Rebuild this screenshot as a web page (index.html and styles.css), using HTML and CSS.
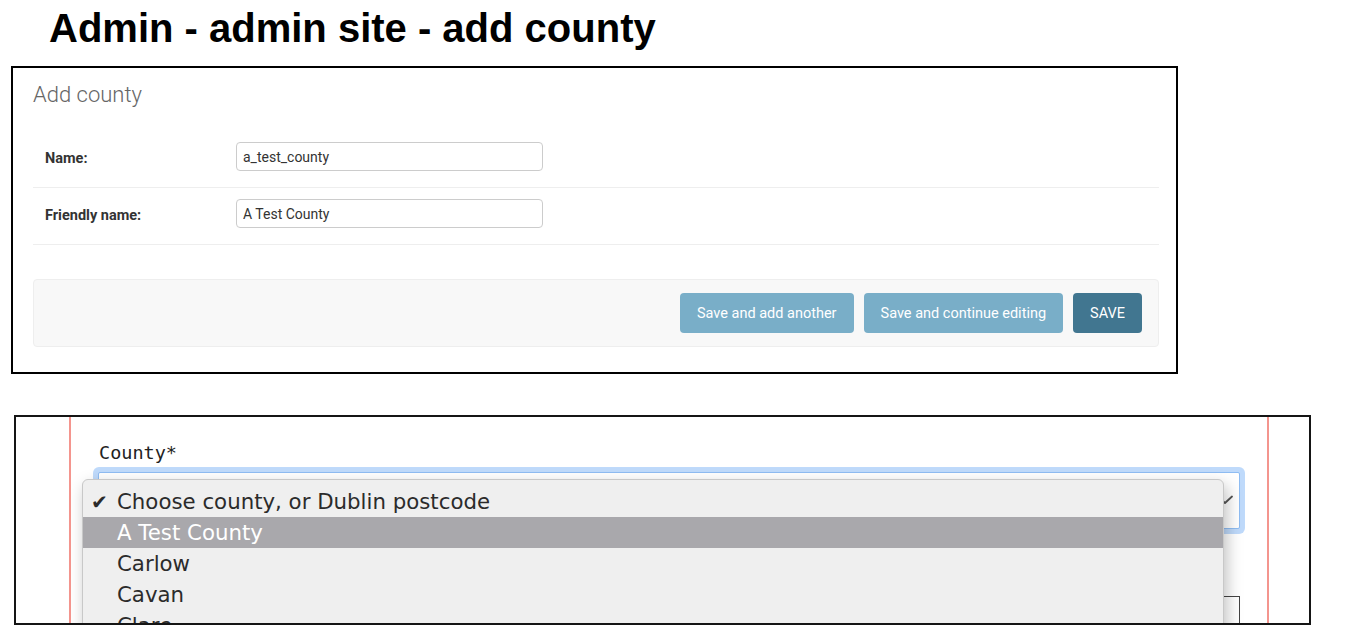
FILE: index.html
```html
<!DOCTYPE html>
<html lang="en">
<head>
<meta charset="utf-8">
<title>Admin - admin site - add county</title>
<link rel="stylesheet" href="styles.css">
</head>
<body>
<h1 class="doc-title">Admin - admin site - add county</h1>

<section class="shot shot-admin">
  <h2 class="admin-title">Add county</h2>
  <div class="form-row">
    <label class="form-label" for="f-name">Name:</label>
    <input class="text-input" id="f-name" type="text" value="a_test_county" readonly>
  </div>
  <div class="form-row">
    <label class="form-label" for="f-friendly">Friendly name:</label>
    <input class="text-input" id="f-friendly" type="text" value="A Test County" readonly>
  </div>
  <div class="submit-row">
    <button class="btn btn-light" type="button">Save and add another</button>
    <button class="btn btn-light" type="button">Save and continue editing</button>
    <button class="btn btn-dark" type="button">SAVE</button>
  </div>
</section>

<section class="shot shot-site">
  <div class="page">
    <label class="field-label">County*</label>
    <div class="select-box">
      <svg class="select-arrow" width="16" height="10" viewBox="0 0 16 10" aria-hidden="true">
        <path d="M1 1.5 L8 8 L15 1.5" fill="none" stroke="#555" stroke-width="1.8" stroke-linecap="round" stroke-linejoin="round"/>
      </svg>
    </div>
    <div class="next-field"></div>
  </div>
  <ul class="select-menu">
    <li class="opt opt-checked">Choose county, or Dublin postcode</li>
    <li class="opt opt-hl">A Test County</li>
    <li class="opt">Carlow</li>
    <li class="opt">Cavan</li>
    <li class="opt">Clare</li>
  </ul>
</section>
</body>
</html>
```

FILE: styles.css
```css
html, body {
  margin: 0;
  padding: 0;
  background: #ffffff;
}

body {
  font-family: "Liberation Sans", Arial, sans-serif;
  width: 1354px;
  height: 640px;
  overflow: hidden;
}

.doc-title {
  margin: 0;
  padding: 5px 0 0 49px;
  font-family: "Liberation Sans", Arial, sans-serif;
  font-weight: 700;
  font-size: 40px;
  line-height: 46px;
  color: #000;
}

.shot {
  box-sizing: border-box;
  background: #fff;
}

/* ---------- admin screenshot ---------- */
.shot-admin {
  margin: 15px 0 0 11px;
  width: 1167px;
  height: 308px;
  border: 2px solid #000;
  padding: 13px 17px 0 20px;
  font-family: Roboto, "Liberation Sans", sans-serif;
}

.admin-title {
  margin: 0 0 22px;
  font-size: 22px;
  line-height: 28px;
  font-weight: 300;
  color: #666;
}

.form-row {
  display: flex;
  align-items: center;
  padding: 11px 0 16px;
  border-bottom: 1px solid #eee;
}

.form-label {
  box-sizing: border-box;
  width: 203px;
  padding: 4px 0 0 12px;
  font-size: 14.5px;
  line-height: 18px;
  font-weight: 700;
  color: #333;
}

.text-input {
  box-sizing: border-box;
  width: 307px;
  height: 29px;
  margin: 0;
  padding: 0 6px;
  border: 1px solid #ccc;
  border-radius: 4px;
  font-family: Roboto, "Liberation Sans", sans-serif;
  font-size: 14px;
  color: #333;
  background: #fff;
  outline: none;
}

.submit-row {
  box-sizing: border-box;
  margin-top: 34px;
  height: 68px;
  padding: 13px 16px;
  display: flex;
  justify-content: flex-end;
  gap: 10px;
  background: #f8f8f8;
  border: 1px solid #eee;
  border-radius: 4px;
}

.btn {
  height: 40px;
  padding: 0 17px;
  border: 0;
  border-radius: 4px;
  font-family: Roboto, "Liberation Sans", sans-serif;
  font-size: 14.5px;
  color: #fff;
  cursor: pointer;
}

.btn-light { background: #79aec8; }
.btn-dark  { background: #417690; }

/* ---------- site screenshot ---------- */
.shot-site {
  position: relative;
  overflow: hidden;
  margin: 41px 0 0 14px;
  width: 1297px;
  height: 210px;
  border: 2px solid #151515;
}

.page {
  box-sizing: border-box;
  margin-left: 53px;
  width: 1200px;
  height: 100%;
  padding: 25px 27px 0;
  border-left: 2px solid #f4958e;
  border-right: 2px solid #f4958e;
}

.field-label {
  display: block;
  margin-left: 1px;
  font-family: "DejaVu Sans Mono", monospace;
  font-size: 18.5px;
  line-height: 22px;
  color: #222;
}

.select-box {
  position: relative;
  box-sizing: border-box;
  margin-top: 8px;
  height: 57px;
  border: 1px solid #8fbdf3;
  border-radius: 2px;
  box-shadow: 0 0 0 5px #bfdafb;
  background: #fff;
}

.select-arrow {
  position: absolute;
  right: 6px;
  top: 22px;
}

.next-field {
  margin-top: 67px;
  height: 50px;
  border: 1px solid #444;
}

.select-menu {
  position: absolute;
  left: 66px;
  top: 62px;
  box-sizing: border-box;
  width: 1142px;
  height: 200px;
  margin: 0;
  padding: 6px 0 0;
  list-style: none;
  background: #efefef;
  border: 1px solid #c8c8c8;
  border-radius: 6px 6px 0 0;
  box-shadow: 3px 6px 16px rgba(0, 0, 0, 0.25);
  font-family: "DejaVu Sans", sans-serif;
  font-size: 21.3px;
  line-height: 31px;
  color: #2b2b2b;
}

.opt {
  position: relative;
  height: 31px;
  padding-left: 34px;
  white-space: nowrap;
}

.opt-checked::before {
  content: "\2714";
  position: absolute;
  left: 8px;
  top: 1px;
  font-size: 20px;
  color: #2b2b2b;
}

.opt-hl {
  background: #a9a8ac;
  color: #fff;
}
```
